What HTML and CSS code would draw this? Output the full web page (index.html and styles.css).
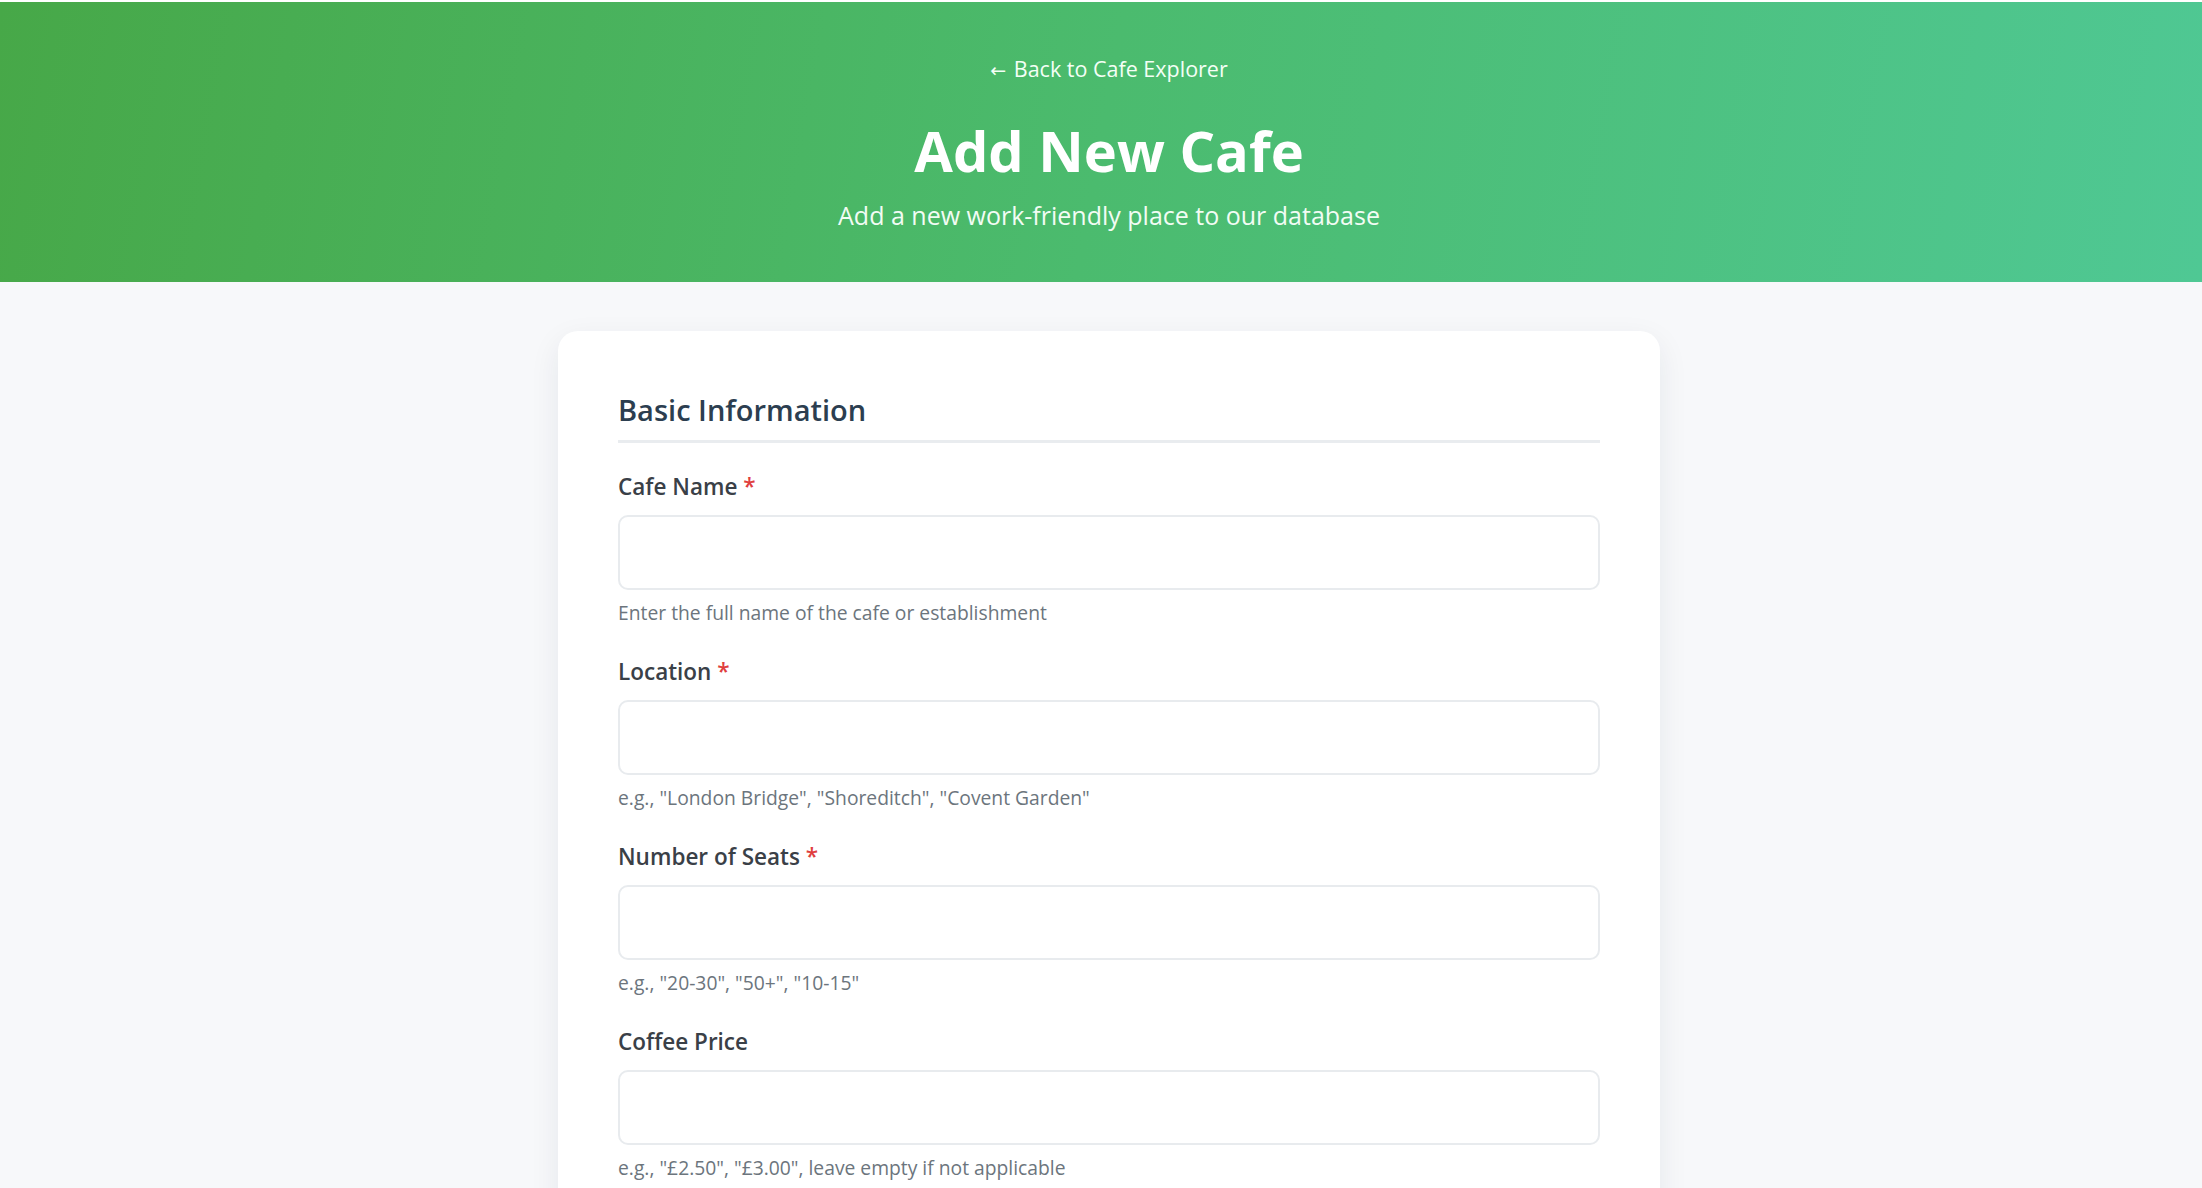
FILE: index.html
```html
<!DOCTYPE html>
<html lang="en">
<head>
<meta charset="utf-8">
<title>Add New Cafe</title>
<link rel="stylesheet" href="styles.css">
</head>
<body>
<header class="hero">
  <a class="back-link" href="#"><span class="arrow">←</span> Back to Cafe Explorer</a>
  <h1 class="hero-title">Add New Cafe</h1>
  <p class="hero-subtitle">Add a new work-friendly place to our database</p>
</header>
<main class="page">
  <form class="card">
    <h2 class="section-title">Basic Information</h2>
    <div class="field">
      <label class="field-label">Cafe Name <span class="req">*</span></label>
      <input class="field-input" type="text">
      <p class="field-help">Enter the full name of the cafe or establishment</p>
    </div>
    <div class="field">
      <label class="field-label">Location <span class="req">*</span></label>
      <input class="field-input" type="text">
      <p class="field-help">e.g., "London Bridge", "Shoreditch", "Covent Garden"</p>
    </div>
    <div class="field">
      <label class="field-label">Number of Seats <span class="req">*</span></label>
      <input class="field-input" type="text">
      <p class="field-help">e.g., "20-30", "50+", "10-15"</p>
    </div>
    <div class="field">
      <label class="field-label">Coffee Price</label>
      <input class="field-input" type="text">
      <p class="field-help">e.g., "£2.50", "£3.00", leave empty if not applicable</p>
    </div>
    <div class="field">
      <label class="field-label">Map URL</label>
      <input class="field-input" type="text">
      <p class="field-help">Link to the cafe on Google Maps</p>
    </div>
  </form>
</main>
</body>
</html>
```
FILE: styles.css
```css
* { box-sizing: border-box; }
html, body { margin: 0; padding: 0; }
body {
  background: #f7f8fa;
  font-family: "Open Sans", "Noto Sans", sans-serif;
  color: #2c3e50;
}
.hero {
  border-top: 2px solid #ffffff;
  background: linear-gradient(100deg, #47a848 0%, #4bbb6e 50%, #4fc894 100%);
  color: #ffffff;
  text-align: center;
  padding: 53px 0 51px 16px;
}
.back-link {
  display: inline-block;
  color: #f4fff6;
  text-decoration: none;
  font-size: 21.5px;
  line-height: 28px;
}
.arrow {
  font-family: "DejaVu Sans", sans-serif;
  font-size: 19px;
  line-height: 1;
  margin-right: 2px;
}
.hero-title {
  margin: 33px 0 0;
  font-size: 56px;
  line-height: 68px;
  font-weight: 700;
}
.hero-subtitle {
  margin: 15px 0 0;
  font-size: 25px;
  line-height: 32px;
  color: #f2fcf4;
}
.page {
  padding: 49px 0 0 16px;
}
.card {
  max-width: 1102px;
  margin: 0 auto;
  background: #ffffff;
  border-radius: 20px;
  box-shadow: 0 10px 30px rgba(30, 40, 60, 0.08);
  padding: 61px 60px 60px;
}
.section-title {
  margin: 0;
  font-size: 29px;
  line-height: 36px;
  font-weight: 600;
  color: #2c3e50;
  padding-bottom: 12px;
  border-bottom: 3px solid #e9ecef;
}
.field {
  display: flex;
  flex-direction: column;
  margin-top: 33px;
}
.section-title + .field { margin-top: 30px; }
.field-label {
  font-size: 22.5px;
  line-height: 28px;
  font-weight: 600;
  color: #3a4047;
}
.req { color: #e03e3e; }
.field-input {
  margin-top: 14px;
  height: 75px;
  border: 2px solid #e8ebee;
  border-radius: 10px;
  background: #ffffff;
  font: inherit;
  padding: 0 18px;
}
.field-help {
  margin: 11px 0 0;
  font-size: 19.3px;
  line-height: 24px;
  color: #6c757d;
}
```
